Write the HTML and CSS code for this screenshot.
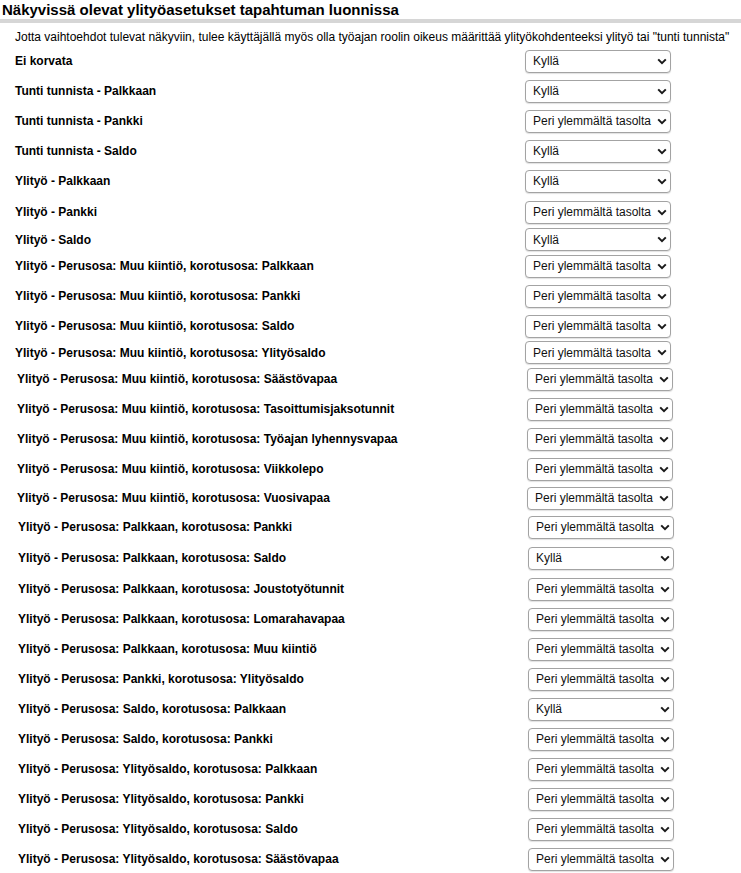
FILE: index.html
```html
<!DOCTYPE html>
<html lang="fi">

<head>
    <meta charset="UTF-8">
    <meta name="viewport" content="width=device-width, initial-scale=1.0">
    <title>Ylityöasetukset</title>
    <link rel="stylesheet" href="styles.css">
</head>

<body>
    <h2 class="title">Näkyvissä olevat ylityöasetukset tapahtuman luonnissa</h2>
    <p class="intro">Jotta vaihtoehdot tulevat näkyviin, tulee käyttäjällä myös olla työajan roolin oikeus määrittää ylityökohdenteeksi ylityö tai "tunti tunnista"</p>

    <div class="settings">
        <!-- perusvaihtoehdot -->
        <section class="group group-a">
            <div class="row"><span class="label">Ei korvata</span><span class="pick"><select><option>Kyllä</option><option>Ei</option><option>Peri ylemmältä tasolta</option></select><svg viewBox="0 0 10 7"><path d="M1.2 1.4 5 5.2 8.8 1.4"/></svg></span></div>
            <div class="row"><span class="label">Tunti tunnista - Palkkaan</span><span class="pick"><select><option>Kyllä</option><option>Ei</option><option>Peri ylemmältä tasolta</option></select><svg viewBox="0 0 10 7"><path d="M1.2 1.4 5 5.2 8.8 1.4"/></svg></span></div>
            <div class="row"><span class="label">Tunti tunnista - Pankki</span><span class="pick"><select><option>Peri ylemmältä tasolta</option><option>Kyllä</option><option>Ei</option></select><svg viewBox="0 0 10 7"><path d="M1.2 1.4 5 5.2 8.8 1.4"/></svg></span></div>
            <div class="row"><span class="label">Tunti tunnista - Saldo</span><span class="pick"><select><option>Kyllä</option><option>Ei</option><option>Peri ylemmältä tasolta</option></select><svg viewBox="0 0 10 7"><path d="M1.2 1.4 5 5.2 8.8 1.4"/></svg></span></div>
            <div class="row"><span class="label">Ylityö - Palkkaan</span><span class="pick"><select><option>Kyllä</option><option>Ei</option><option>Peri ylemmältä tasolta</option></select><svg viewBox="0 0 10 7"><path d="M1.2 1.4 5 5.2 8.8 1.4"/></svg></span></div>
            <div class="row row-32"><span class="label">Ylityö - Pankki</span><span class="pick"><select><option>Peri ylemmältä tasolta</option><option>Kyllä</option><option>Ei</option></select><svg viewBox="0 0 10 7"><path d="M1.2 1.4 5 5.2 8.8 1.4"/></svg></span></div>
            <div class="row row-tight"><span class="label">Ylityö - Saldo</span><span class="pick"><select><option>Kyllä</option><option>Ei</option><option>Peri ylemmältä tasolta</option></select><svg viewBox="0 0 10 7"><path d="M1.2 1.4 5 5.2 8.8 1.4"/></svg></span></div>
            <div class="row"><span class="label">Ylityö - Perusosa: Muu kiintiö, korotusosa: Palkkaan</span><span class="pick"><select><option>Peri ylemmältä tasolta</option><option>Kyllä</option><option>Ei</option></select><svg viewBox="0 0 10 7"><path d="M1.2 1.4 5 5.2 8.8 1.4"/></svg></span></div>
            <div class="row"><span class="label">Ylityö - Perusosa: Muu kiintiö, korotusosa: Pankki</span><span class="pick"><select><option>Peri ylemmältä tasolta</option><option>Kyllä</option><option>Ei</option></select><svg viewBox="0 0 10 7"><path d="M1.2 1.4 5 5.2 8.8 1.4"/></svg></span></div>
            <div class="row"><span class="label">Ylityö - Perusosa: Muu kiintiö, korotusosa: Saldo</span><span class="pick"><select><option>Peri ylemmältä tasolta</option><option>Kyllä</option><option>Ei</option></select><svg viewBox="0 0 10 7"><path d="M1.2 1.4 5 5.2 8.8 1.4"/></svg></span></div>
            <div class="row row-tight"><span class="label">Ylityö - Perusosa: Muu kiintiö, korotusosa: Ylityösaldo</span><span class="pick"><select><option>Peri ylemmältä tasolta</option><option>Kyllä</option><option>Ei</option></select><svg viewBox="0 0 10 7"><path d="M1.2 1.4 5 5.2 8.8 1.4"/></svg></span></div>
        </section>

        <!-- muu kiintiö, loput -->
        <section class="group group-b">
            <div class="row"><span class="label">Ylityö - Perusosa: Muu kiintiö, korotusosa: Säästövapaa</span><span class="pick"><select><option>Peri ylemmältä tasolta</option><option>Kyllä</option><option>Ei</option></select><svg viewBox="0 0 10 7"><path d="M1.2 1.4 5 5.2 8.8 1.4"/></svg></span></div>
            <div class="row"><span class="label">Ylityö - Perusosa: Muu kiintiö, korotusosa: Tasoittumisjaksotunnit</span><span class="pick"><select><option>Peri ylemmältä tasolta</option><option>Kyllä</option><option>Ei</option></select><svg viewBox="0 0 10 7"><path d="M1.2 1.4 5 5.2 8.8 1.4"/></svg></span></div>
            <div class="row"><span class="label">Ylityö - Perusosa: Muu kiintiö, korotusosa: Työajan lyhennysvapaa</span><span class="pick"><select><option>Peri ylemmältä tasolta</option><option>Kyllä</option><option>Ei</option></select><svg viewBox="0 0 10 7"><path d="M1.2 1.4 5 5.2 8.8 1.4"/></svg></span></div>
            <div class="row"><span class="label">Ylityö - Perusosa: Muu kiintiö, korotusosa: Viikkolepo</span><span class="pick"><select><option>Peri ylemmältä tasolta</option><option>Kyllä</option><option>Ei</option></select><svg viewBox="0 0 10 7"><path d="M1.2 1.4 5 5.2 8.8 1.4"/></svg></span></div>
            <div class="row row-28"><span class="label">Ylityö - Perusosa: Muu kiintiö, korotusosa: Vuosivapaa</span><span class="pick"><select><option>Peri ylemmältä tasolta</option><option>Kyllä</option><option>Ei</option></select><svg viewBox="0 0 10 7"><path d="M1.2 1.4 5 5.2 8.8 1.4"/></svg></span></div>
        </section>

        <!-- palkkaan, pankki, saldo, ylityösaldo -->
        <section class="group group-c">
            <div class="row"><span class="label">Ylityö - Perusosa: Palkkaan, korotusosa: Pankki</span><span class="pick"><select><option>Peri ylemmältä tasolta</option><option>Kyllä</option><option>Ei</option></select><svg viewBox="0 0 10 7"><path d="M1.2 1.4 5 5.2 8.8 1.4"/></svg></span></div>
            <div class="row row-32"><span class="label">Ylityö - Perusosa: Palkkaan, korotusosa: Saldo</span><span class="pick"><select><option>Kyllä</option><option>Ei</option><option>Peri ylemmältä tasolta</option></select><svg viewBox="0 0 10 7"><path d="M1.2 1.4 5 5.2 8.8 1.4"/></svg></span></div>
            <div class="row"><span class="label">Ylityö - Perusosa: Palkkaan, korotusosa: Joustotyötunnit</span><span class="pick"><select><option>Peri ylemmältä tasolta</option><option>Kyllä</option><option>Ei</option></select><svg viewBox="0 0 10 7"><path d="M1.2 1.4 5 5.2 8.8 1.4"/></svg></span></div>
            <div class="row"><span class="label">Ylityö - Perusosa: Palkkaan, korotusosa: Lomarahavapaa</span><span class="pick"><select><option>Peri ylemmältä tasolta</option><option>Kyllä</option><option>Ei</option></select><svg viewBox="0 0 10 7"><path d="M1.2 1.4 5 5.2 8.8 1.4"/></svg></span></div>
            <div class="row"><span class="label">Ylityö - Perusosa: Palkkaan, korotusosa: Muu kiintiö</span><span class="pick"><select><option>Peri ylemmältä tasolta</option><option>Kyllä</option><option>Ei</option></select><svg viewBox="0 0 10 7"><path d="M1.2 1.4 5 5.2 8.8 1.4"/></svg></span></div>
            <div class="row"><span class="label">Ylityö - Perusosa: Pankki, korotusosa: Ylityösaldo</span><span class="pick"><select><option>Peri ylemmältä tasolta</option><option>Kyllä</option><option>Ei</option></select><svg viewBox="0 0 10 7"><path d="M1.2 1.4 5 5.2 8.8 1.4"/></svg></span></div>
            <div class="row"><span class="label">Ylityö - Perusosa: Saldo, korotusosa: Palkkaan</span><span class="pick"><select><option>Kyllä</option><option>Ei</option><option>Peri ylemmältä tasolta</option></select><svg viewBox="0 0 10 7"><path d="M1.2 1.4 5 5.2 8.8 1.4"/></svg></span></div>
            <div class="row"><span class="label">Ylityö - Perusosa: Saldo, korotusosa: Pankki</span><span class="pick"><select><option>Peri ylemmältä tasolta</option><option>Kyllä</option><option>Ei</option></select><svg viewBox="0 0 10 7"><path d="M1.2 1.4 5 5.2 8.8 1.4"/></svg></span></div>
            <div class="row"><span class="label">Ylityö - Perusosa: Ylityösaldo, korotusosa: Palkkaan</span><span class="pick"><select><option>Peri ylemmältä tasolta</option><option>Kyllä</option><option>Ei</option></select><svg viewBox="0 0 10 7"><path d="M1.2 1.4 5 5.2 8.8 1.4"/></svg></span></div>
            <div class="row"><span class="label">Ylityö - Perusosa: Ylityösaldo, korotusosa: Pankki</span><span class="pick"><select><option>Peri ylemmältä tasolta</option><option>Kyllä</option><option>Ei</option></select><svg viewBox="0 0 10 7"><path d="M1.2 1.4 5 5.2 8.8 1.4"/></svg></span></div>
            <div class="row"><span class="label">Ylityö - Perusosa: Ylityösaldo, korotusosa: Saldo</span><span class="pick"><select><option>Peri ylemmältä tasolta</option><option>Kyllä</option><option>Ei</option></select><svg viewBox="0 0 10 7"><path d="M1.2 1.4 5 5.2 8.8 1.4"/></svg></span></div>
            <div class="row"><span class="label">Ylityö - Perusosa: Ylityösaldo, korotusosa: Säästövapaa</span><span class="pick"><select><option>Peri ylemmältä tasolta</option><option>Kyllä</option><option>Ei</option></select><svg viewBox="0 0 10 7"><path d="M1.2 1.4 5 5.2 8.8 1.4"/></svg></span></div>
        </section>
    </div>
</body>

</html>
```

FILE: styles.css
```css
* {
    box-sizing: border-box;
}

body {
    margin: 0;
    background-color: #fff;
    color: #000;
    font-family: "Liberation Sans", Arial, sans-serif;
    font-size: 12px;
}

.title {
    margin: 0;
    padding: 1px 2px 0;
    font-size: 15px;
    line-height: 18px;
    font-weight: bold;
    border-bottom: 4px solid #d6d6d6;
}

.intro {
    margin: 0;
    padding: 7px 0 0 15px;
    line-height: 14px;
    white-space: nowrap;
}

.settings {
    margin-top: 2px;
}

.group-a {
    padding-left: 15px;
}

.group-b {
    padding-left: 17px;
}

.group-c {
    padding-left: 18px;
}

.row {
    height: 30px;
    display: flex;
    align-items: center;
}

.row-tight {
    height: 23px;
}

.row-28 {
    height: 28px;
}

.row-32 {
    height: 32px;
}

.label {
    flex: 0 0 510px;
    font-weight: bold;
    white-space: nowrap;
}

.pick {
    position: relative;
    display: block;
    width: 146px;
    height: 23px;
}

.pick select {
    -webkit-appearance: none;
    appearance: none;
    width: 100%;
    height: 100%;
    margin: 0;
    padding: 0 6px 0 7px;
    border: 1px solid #a3a3a3;
    border-radius: 4px;
    background-color: #fff;
    box-shadow: 0 1px 1px rgba(0, 0, 0, .12);
    color: #111;
    font-family: inherit;
    font-size: 12px;
}

.pick svg {
    position: absolute;
    right: 4px;
    top: 8px;
    width: 10px;
    height: 7px;
    pointer-events: none;
}

.pick path {
    fill: none;
    stroke: #1a1a1a;
    stroke-width: 2;
}
```
